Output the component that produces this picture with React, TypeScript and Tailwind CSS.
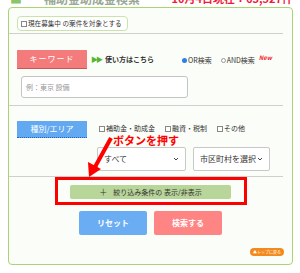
const jp = { fontFamily: '"Noto Sans CJK JP", "Noto Sans", sans-serif' };

const Box = () => (
    <span className="inline-block shrink-0 w-[6px] h-[6px] border border-[#888] bg-white mr-[1px]" />
);

const FakeSelect = ({ label, className }: { label: string; className: string }) => (
    <div
        className={`flex items-center justify-between h-[24px] border border-[#c8c8c8] rounded-[2px] bg-white px-[6px] text-[8px] text-[#333] whitespace-nowrap ${className}`}
    >
        <span>{label}</span>
        <svg width="6" height="4" viewBox="0 0 6 4">
            <path d="M1 1 L3 3 L5 1" stroke="#444" strokeWidth="1" fill="none" />
        </svg>
    </div>
);

const App = () => {
    return (
        <div className="relative w-[300px] h-[273px] overflow-hidden bg-white" style={jp}>
            {/* header, cut off at the top */}
            <div className="flex items-center justify-between h-[17px] -mt-[10px] pl-[10px] pr-[7px] whitespace-nowrap">
                <div className="flex items-center gap-[22px] leading-none">
                    <span className="text-[12px] text-[#8cc46a]">■</span>
                    <span className="text-[12px] font-bold text-[#9aa896]">補助金助成金検索</span>
                </div>
                <span className="text-[11px] font-bold text-[#ee1c3a] leading-none">
                    10月4日現在：63,527件
                </span>
            </div>

            <div className="relative mx-[8px] w-[285px] h-[258px] border border-[#aad474] rounded-[4px] bg-[#fbfdf8]">
                <div className="ml-[8px] mt-[8px] w-[111px] h-[15px] flex items-center pl-[3px] border border-[#c9e3ab] rounded-[4px] bg-white text-[6.6px] text-[#333] whitespace-nowrap">
                    <Box />
                    現在募集中 の案件を対象とする
                </div>
                <div className="mt-[2px] w-[274px] h-px bg-[#cfcfcf]" />

                <div className="flex items-center mt-[16px] ml-[8px] whitespace-nowrap">
                    <div className="w-[70px] h-[18px] flex items-center justify-center bg-[#f47b7b] text-white text-[8px] shadow-[0_1px_0_#c85858] tracking-[1px]">
                        キーワード
                    </div>
                    <span className="ml-[4px] text-[#55b62b] text-[7px] leading-none tracking-[-2px]">▶▶</span>
                    <span className="ml-[4px] text-[7px] font-bold text-[#333]">使い方はこちら</span>
                    <div className="flex items-center ml-[28px] mt-[3px] text-[7px] text-[#333]">
                        <span className="w-[5px] h-[5px] rounded-full bg-[#2d7ee8] mr-[1px]" />
                        <span>OR検索</span>
                        <span className="ml-[9px] w-[5px] h-[5px] rounded-full border border-[#999] mr-[1px]" />
                        <span>AND検索</span>
                        <span className="ml-[4px] -mt-[6px] text-[6px] font-bold italic text-[#f0262e]">New</span>
                    </div>
                </div>

                <div className="mt-[8px] ml-[12px] w-[167px] h-[22px] flex items-center pl-[4px] border border-[#c4c4c4] rounded-[3px] bg-white text-[7px] text-[#999]">
                    例：東京 設備
                </div>
                <div className="mt-[7px] w-[274px] h-px bg-[#cfcfcf]" />

                <div className="flex items-center mt-[15px] ml-[8px] whitespace-nowrap">
                    <div className="w-[70px] h-[17px] flex items-center justify-center bg-[#62a9f2] text-white text-[8px] border-b border-dotted border-[#2a62c0]">
                        種別/エリア
                    </div>
                    <div className="flex items-center ml-[12px] -mt-[2px] gap-[10px] text-[7px] text-[#333]">
                        <span className="flex items-center"><Box />補助金・助成金</span>
                        <span className="flex items-center"><Box />融資・税制</span>
                        <span className="flex items-center"><Box />その他</span>
                    </div>
                </div>

                <div className="flex mt-[9px] ml-[88px] gap-[7px]">
                    <FakeSelect label="すべて" className="w-[89px]" />
                    <FakeSelect label="市区町村を選択" className="w-[77px]" />
                </div>
                <div className="mt-[5px] w-[274px] h-px bg-[#cfcfcf]" />

                <div className="mt-[8px] ml-[61px] w-[161px] h-[14px] flex items-center justify-center rounded-[2px] bg-[#b8d59a] text-[7px] text-[#333] whitespace-nowrap">
                    <span className="mr-[6px] text-[8px]">＋</span>絞り込み条件の 表示/非表示
                </div>

                <div className="flex mt-[12px] ml-[70px] gap-[7px]">
                    <button className="w-[68px] h-[24px] rounded-[2px] bg-[#6badf3] text-white text-[8px] font-bold">
                        リセット
                    </button>
                    <button className="w-[68px] h-[24px] rounded-[2px] bg-[#ff8484] text-white text-[8px] font-bold">
                        検索する
                    </button>
                </div>

                <div className="flex justify-end mt-[13px] mr-[8px]">
                    <span className="h-[8px] px-[3px] flex items-center rounded-full bg-[#f28a1e] text-white text-[4px] leading-none whitespace-nowrap">
                        ▲トップに戻る
                    </span>
                </div>
            </div>

            {/* annotation overlay */}
            <div className="absolute left-[55px] top-[177px] w-[192px] h-[28px] border-[3px] border-[#ff0000]" />
            <span className="absolute left-[113px] top-[135px] text-[11px] font-bold text-[#ff0000] leading-none whitespace-nowrap">
                ボタンを押す
            </span>
            <svg className="absolute left-0 top-0" width="300" height="273" viewBox="0 0 300 273">
                <line x1="111" y1="138" x2="95" y2="167" stroke="#ff0000" strokeWidth="4" />
                <polygon points="89,177 88,162 101,169" fill="#ff0000" />
            </svg>
        </div>
    );
};

export default App;
